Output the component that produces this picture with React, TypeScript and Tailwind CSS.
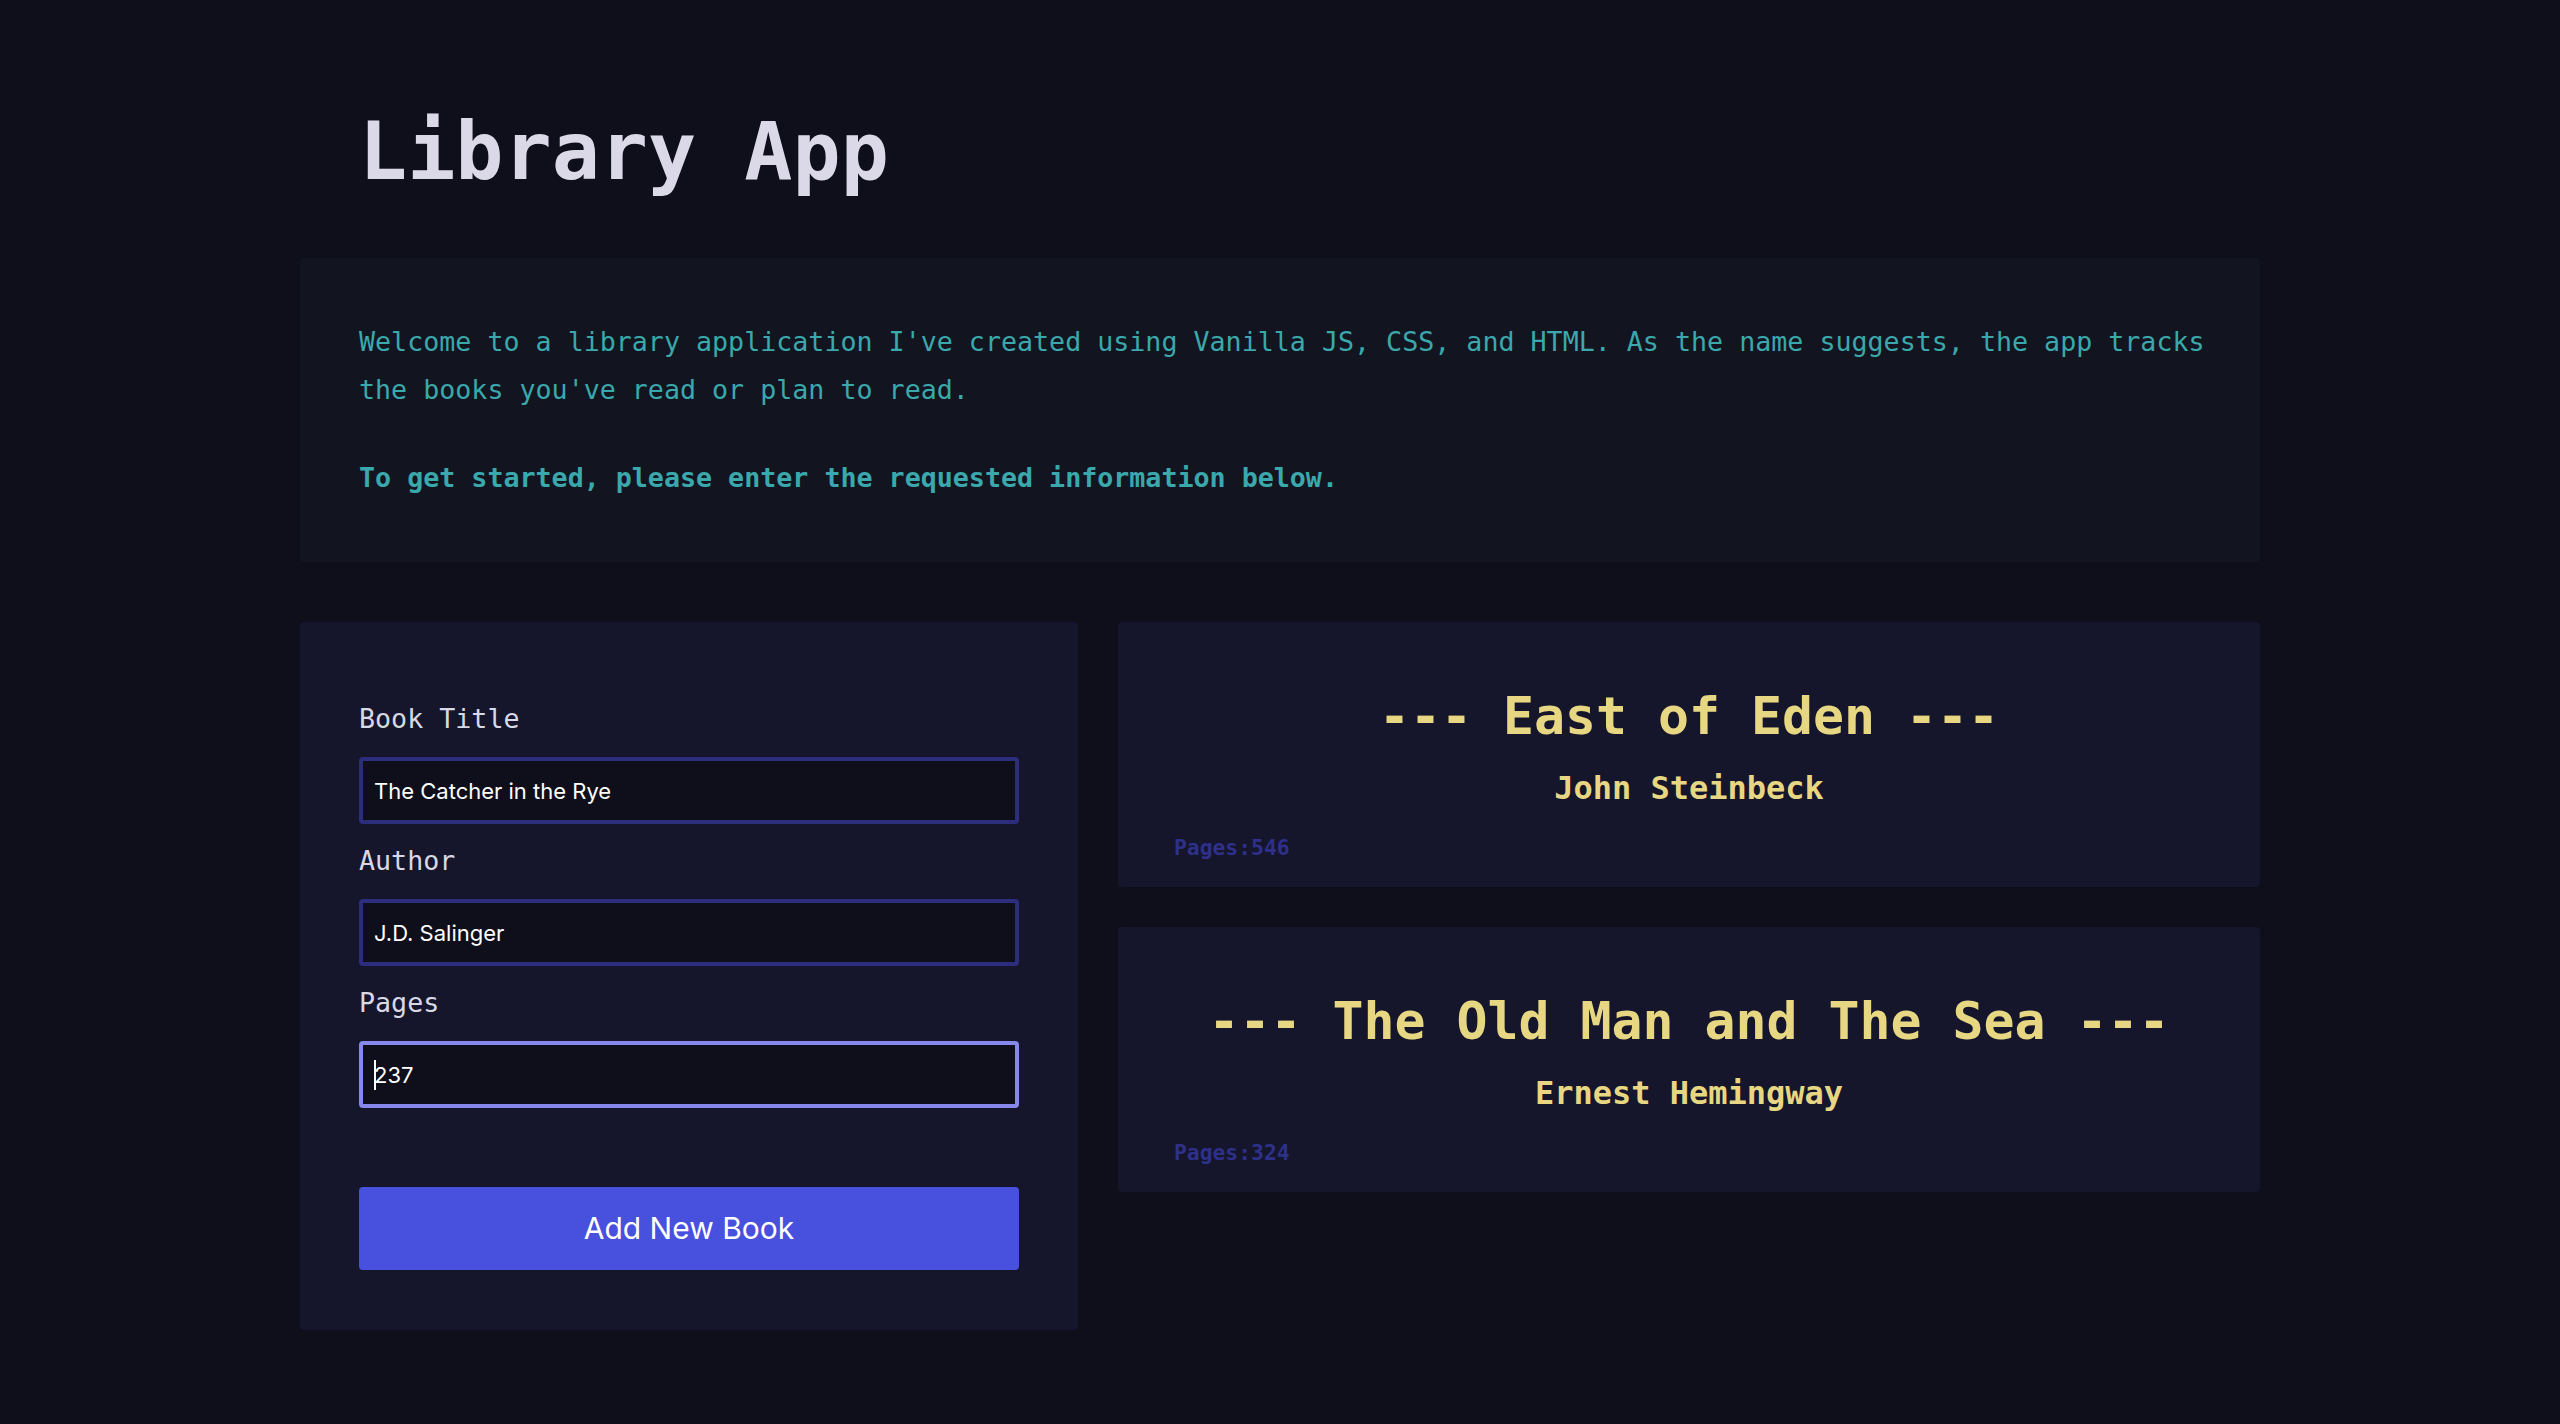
import React from 'react';

const mono = "font-['DejaVu_Sans_Mono','Liberation_Mono',monospace]";
const sans = "font-['Inter','Noto_Sans',sans-serif]";

type Book = { title: string; author: string; pages: number };

const books: Book[] = [
  { title: 'East of Eden', author: 'John Steinbeck', pages: 546 },
  { title: 'The Old Man and The Sea', author: 'Ernest Hemingway', pages: 324 },
];

function Field({ label, value, focused }: { label: string; value: string; focused?: boolean }) {
  return (
    <div className="flex flex-col">
      <label className={`${mono} text-[26.67px] leading-[40px] text-[#d9d8e6]`}>{label}</label>
      <div className="relative mt-[18px]">
        <input
          type="text"
          defaultValue={value}
          readOnly
          className={`${sans} w-full h-[67px] rounded-[4px] border-[4px] bg-[#0f0e1b] px-[11px] text-[22px] text-white outline-none ${
            focused ? 'border-[#8688ec]' : 'border-[#2c2d7c]'
          }`}
        />
        {focused && <span className="absolute left-[15px] top-[19px] h-[30px] w-[2px] bg-white"></span>}
      </div>
    </div>
  );
}

function BookCard({ book }: { book: Book }) {
  return (
    <div className={`${mono} bg-[#15162b] rounded-[4px] pt-[64px] pb-[23px] px-[56px] flex flex-col`}>
      <h2 className="text-center text-[51.5px] leading-[60px] font-bold text-[#e7d682]">
        --- {book.title} ---
      </h2>
      <p className="mt-[18px] text-center text-[32px] leading-[48px] font-bold text-[#e7d682]">{book.author}</p>
      <p className="mt-[20px] text-[21.33px] leading-[32px] font-bold text-[#2e308a]">Pages:{book.pages}</p>
    </div>
  );
}

export default function App() {
  return (
    <div className="min-h-screen w-full bg-[#0f0e1b]">
      <div className="mx-auto w-[1960px] pt-[104px] pb-[80px]">
        <h1 className={`${mono} px-[59px] text-[80px] leading-[96px] font-bold text-[#dbd9e7]`}>Library App</h1>

        <div className={`${mono} mt-[58px] bg-[#12151f] rounded-[4px] pl-[59px] pr-[40px] py-[60px] text-[26.67px] text-[#3aa8ac]`}>
          <p className="leading-[48px]">
            Welcome to a library application I've created using Vanilla JS, CSS, and HTML. As the name suggests, the app tracks the books you've read or plan to read.
          </p>
          <p className="mt-[40px] leading-[48px] font-bold">To get started, please enter the requested information below.</p>
        </div>

        <div className="mt-[60px] flex items-start gap-[40px]">
          <form className="w-[778px] shrink-0 bg-[#15162b] rounded-[4px] pt-[77px] pb-[60px] px-[59px] flex flex-col">
            <div className="flex flex-col gap-[17px]">
              <Field label="Book Title" value="The Catcher in the Rye" />
              <Field label="Author" value="J.D. Salinger" />
              <Field label="Pages" value="237" focused />
            </div>
            <button
              type="button"
              className={`${sans} mt-[79px] h-[83px] w-full rounded-[4px] bg-[#4850de] text-[30px] text-white`}
            >
              Add New Book
            </button>
          </form>

          <div className="flex-1 flex flex-col gap-[40px]">
            {books.map(b => (
              <BookCard key={b.title} book={b} />
            ))}
          </div>
        </div>
      </div>
    </div>
  );
}
